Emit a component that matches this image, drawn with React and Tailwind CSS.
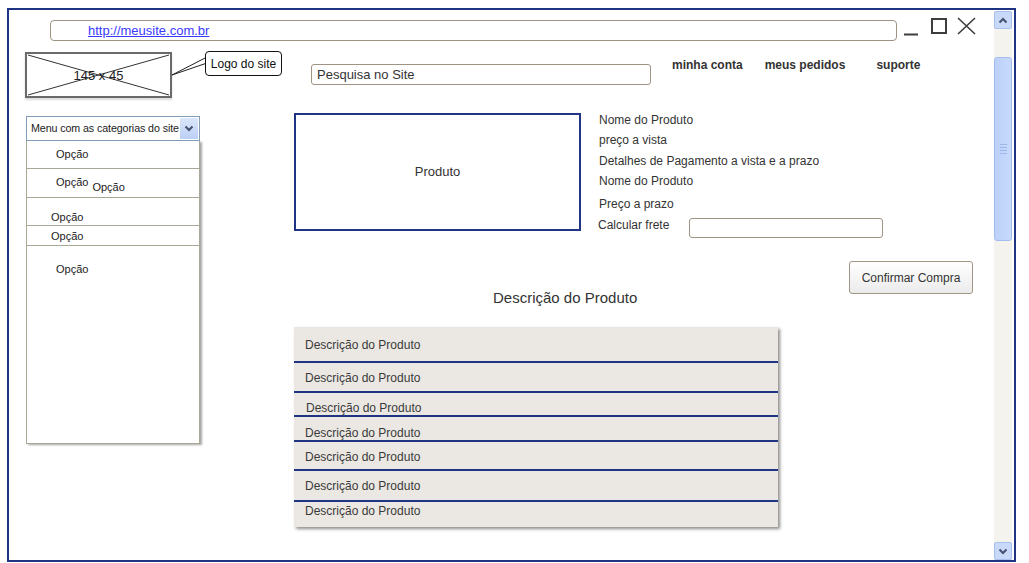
const navy = "border-[#1f3482]";

const MenuRow = ({ className, children }) => (
  <div className={`border-b border-[#aba797] ${className}`}>{children}</div>
);

const DescRow = ({ h, pt, last, children }) => (
  <div
    className={`${h} ${pt} pl-[11px] text-[12px] leading-[14px] text-[#3a3a3a] ${
      last ? "" : "border-b-2 border-[#1f3482]"
    }`}
  >
    {children}
  </div>
);

const Chevron = ({ up }) => (
  <svg width="10" height="7" viewBox="0 0 10 7">
    <path
      d={up ? "M1.5 5.5 L5 2 L8.5 5.5" : "M1.5 1.5 L5 5 L8.5 1.5"}
      fill="none"
      stroke="#44506e"
      strokeWidth="2"
    />
  </svg>
);

const Scrollbar = () => (
  <div className="w-[21px] h-full pt-[1px] pl-[1px]">
    <div className="w-[18px] h-full bg-[#f4f3ee] flex flex-col">
      <div className="h-[18px] rounded-[2px] border border-[#a9c0ee] bg-[#c9d9f9] flex items-center justify-center">
        <Chevron up />
      </div>
      <div className="mt-[28px] h-[184px] rounded-[3px] border border-[#a3bcf0] bg-gradient-to-r from-[#bcd1fa] to-[#c8d9fb] flex items-center justify-center">
        <div className="flex flex-col gap-[2px]">
          <div className="w-[7px] h-px bg-[#9fb7e8]" />
          <div className="w-[7px] h-px bg-[#9fb7e8]" />
          <div className="w-[7px] h-px bg-[#9fb7e8]" />
          <div className="w-[7px] h-px bg-[#9fb7e8]" />
        </div>
      </div>
      <div className="mt-auto h-[18px] rounded-[2px] border border-[#a9c0ee] bg-[#c9d9f9] flex items-center justify-center">
        <Chevron />
      </div>
    </div>
  </div>
);

export default function App() {
  return (
    <div className="w-[1029px] h-[563px] overflow-hidden bg-white pl-[7px] pt-[8px] font-['Liberation_Sans',Arial,sans-serif]">
      <div className={`w-[1009px] h-[554px] border-2 ${navy} flex`}>
        <div className="w-[984px] h-full">
          {/* address bar + window controls */}
          <div className="flex items-start pt-[10px] pl-[41px]">
            <div className="w-[847px] h-[21px] rounded-[4px] border border-[#9f9483] pl-[37px] flex items-center">
              <span className="text-[13px] leading-[15px] text-[#3a3aff] underline">
                http://meusite.com.br
              </span>
            </div>
            <svg className="-mt-[4px] ml-[3px]" width="80" height="24" viewBox="0 0 80 24">
              <line x1="4" y1="18.5" x2="18" y2="18.5" stroke="#3d3d3d" strokeWidth="2" />
              <rect x="32" y="3" width="14" height="14" fill="none" stroke="#3d3d3d" strokeWidth="2" />
              <path d="M58 2 L75 18 M75 2 L58 18" stroke="#3d3d3d" strokeWidth="1.6" />
            </svg>
          </div>

          {/* header */}
          <div className="relative flex items-start mt-[10px]">
            <div className="ml-[16px] mt-[1px] w-[147px] h-[46px] border-2 border-[#6a6a6a] relative flex items-center justify-center shadow-[0_2px_2px_rgba(0,0,0,0.15)]">
              <svg className="absolute inset-0" width="143" height="42" viewBox="0 0 143 42">
                <line x1="1" y1="1" x2="142" y2="41" stroke="#333" strokeWidth="1" />
                <line x1="142" y1="1" x2="1" y2="41" stroke="#333" strokeWidth="1" />
              </svg>
              <span className="relative text-[13px] leading-[15px] text-[#222]">145 x 45</span>
            </div>
            <svg className="absolute left-[162px] top-[4px]" width="36" height="24" viewBox="0 0 36 24">
              <path d="M1 20 L36 2 M1 20 L36 8" stroke="#222" strokeWidth="1" fill="none" />
            </svg>
            <div className="relative ml-[33px] w-[77px] h-[25px] rounded-[4px] border border-[#111] bg-white flex items-center justify-center text-[12px] text-[#111]">
              Logo do site
            </div>
            <div className="ml-[29px] mt-[13px] w-[340px] h-[21px] rounded-[3px] border border-[#9f9483] pl-[5px] flex items-center text-[13px] text-[#333]">
              Pesquisa no Site
            </div>
            <div className="ml-[21px] mt-[7px] flex text-[12px] leading-[15px] font-bold text-[#333]">
              <span>minha conta</span>
              <span className="ml-[22px]">meus pedidos</span>
              <span className="ml-[31px]">suporte</span>
            </div>
          </div>

          {/* body */}
          <div className="flex items-start mt-[15px]">
            {/* category menu */}
            <div className="ml-[17px] mt-[3px] w-[174px]">
              <div className="relative h-[25px] border border-[#7f9db9] pl-[4px] flex items-center text-[10.7px] tracking-[-0.1px] text-[#222] whitespace-nowrap">
                <div className="absolute right-[1px] top-[1px] w-[18px] h-[21px] bg-gradient-to-b from-[#dbe6fb] to-[#bccff5] flex items-center justify-center">
                  <Chevron />
                </div>
                <span className="relative">Menu com as categorias do site</span>
              </div>
              <div className="h-[303px] border border-t-0 border-[#aba797] shadow-[2px_1px_2px_rgba(0,0,0,0.35)] text-[11px] leading-[14px] text-[#222]">
                <MenuRow className="h-[28px] pt-[6px] pl-[29px]">Opção</MenuRow>
                <MenuRow className="h-[29px] pt-[6px] pl-[29px] flex items-start">
                  <span>Opção</span>
                  <span className="ml-[4px] mt-[5px]">Opção</span>
                </MenuRow>
                <MenuRow className="h-[28px] pt-[12px] pl-[24px]">Opção</MenuRow>
                <MenuRow className="h-[20px] pt-[3px] pl-[24px]">Opção</MenuRow>
                <div className="pt-[16px] pl-[29px]">Opção</div>
              </div>
            </div>

            {/* product area */}
            <div className="ml-[94px] w-[699px]">
              <div className="flex items-start h-[126px]">
                <div className={`w-[287px] h-[118px] border-2 ${navy} flex items-center justify-center text-[13px] text-[#333]`}>
                  Produto
                </div>
                <div className="ml-[18px] text-[12px] leading-[14px] text-[#333]">
                  <div>Nome do Produto</div>
                  <div className="mt-[6px]">preço a vista</div>
                  <div className="mt-[7px]">Detalhes de Pagamento a vista e a prazo</div>
                  <div className="mt-[6px]">Nome do Produto</div>
                  <div className="mt-[9px]">Preço a prazo</div>
                  <div className="mt-[7px] -ml-[1px] flex items-start">
                    <span className="w-[91px]">Calcular frete</span>
                    <div className="w-[194px] h-[20px] rounded-[3px] border border-[#9f9483]" />
                  </div>
                </div>
              </div>

              <div className="flex items-start mt-[22px]">
                <div className="ml-[199px] mt-[28px] text-[15px] leading-[18px] text-[#333]">
                  Descrição do Produto
                </div>
                <button className="ml-auto mr-[20px] w-[124px] h-[33px] rounded-[3px] border border-[#a39583] bg-gradient-to-b from-white to-[#ebebeb] text-[12px] text-[#333]">
                  Confirmar Compra
                </button>
              </div>

              <div className="mt-[20px] w-[484px] bg-[#ebe8e3] shadow-[2px_2px_3px_rgba(0,0,0,0.45)]">
                <DescRow h="h-[36px]" pt="pt-[11px]">Descrição do Produto</DescRow>
                <DescRow h="h-[30px]" pt="pt-[8px]">Descrição do Produto</DescRow>
                <DescRow h="h-[24px]" pt="pt-[8px]">
                  <span className="ml-[1px]">Descrição do Produto</span>
                </DescRow>
                <DescRow h="h-[25px]" pt="pt-[9px]">Descrição do Produto</DescRow>
                <DescRow h="h-[29px]" pt="pt-[8px]">Descrição do Produto</DescRow>
                <DescRow h="h-[31px]" pt="pt-[8px]">Descrição do Produto</DescRow>
                <DescRow h="h-[25px]" pt="pt-[2px]" last>Descrição do Produto</DescRow>
              </div>
            </div>
          </div>
        </div>
        <Scrollbar />
      </div>
    </div>
  );
}
